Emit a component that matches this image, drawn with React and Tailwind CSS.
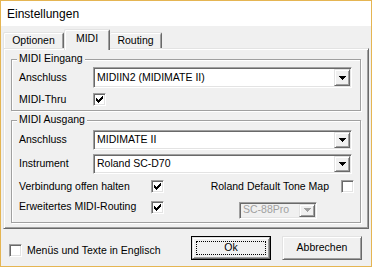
import React from 'react';

const raised =
    'border border-t-[#e3e3e3] border-l-[#e3e3e3] border-b-[#696969] border-r-[#696969] shadow-[inset_1px_1px_0_#fff,inset_-1px_-1px_0_#a0a0a0]';
const sunken =
    'border border-t-[#a0a0a0] border-l-[#a0a0a0] border-b-white border-r-white shadow-[inset_1px_1px_0_#696969,inset_-1px_-1px_0_#e3e3e3]';

const CHECK = ['0000001', '0000011', '1000111', '1101110', '1111100', '0111000', '0010000'];

const Check = ({ checked, className = '' }) => (
    <div className={`${sunken} w-[13px] h-[13px] bg-white flex items-center justify-center shrink-0 ${className}`}>
        {checked && (
            <svg width="7" height="7" shapeRendering="crispEdges">
                {CHECK.map((row, y) =>
                    row.split('').map((c, x) =>
                        c === '1' ? <rect key={`${x}-${y}`} x={x} y={y} width="1" height="1" fill="#000" /> : null
                    )
                )}
            </svg>
        )}
    </div>
);

const Combo = ({ value, disabled, className = '' }) => (
    <div className={`${sunken} flex items-center ${disabled ? 'bg-[#f0f0f0]' : 'bg-white'} ${className}`}>
        <span className={`flex-1 pl-[3px] truncate ${disabled ? 'text-[#a0a0a0]' : 'text-black'}`}>{value}</span>
        <div className={`${raised} w-[16px] self-stretch my-[1px] mr-[1px] bg-[#f0f0f0] flex items-center justify-center`}>
            <svg width="7" height="4" shapeRendering="crispEdges">
                <path d="M0 0h7v1h-1v1h-1v1h-1v1h-1v-1h-1v-1h-1v-1h-1z" fill={disabled ? '#a0a0a0' : '#000'} />
            </svg>
        </div>
    </div>
);

const Group = ({ title, className = '', children }) => (
    <div className={`relative border border-[#a0a0a0] shadow-[inset_1px_1px_0_#fff,1px_1px_0_#fff] ${className}`}>
        <span className="absolute top-[-8px] left-[5px] bg-[#f0f0f0] px-[2px] leading-[13px]">{title}</span>
        {children}
    </div>
);

const Row = ({ label, children, className = '' }) => (
    <div className={`flex items-center ${className}`}>
        <span className="w-[74px] shrink-0">{label}</span>
        {children}
    </div>
);

const App = () => {
    return (
        <div className="w-[372px] h-[267px] border border-[#e5b552] bg-[#f0f0f0] flex flex-col font-['Liberation_Sans',Arial,sans-serif] text-[10.5px] text-black">
            <div className="h-[25px] bg-white flex items-center pl-[6px] text-[12px] shrink-0">Einstellungen</div>

            <div className="pl-[2px] pt-[3px]">
                <div className="flex items-end h-[20px] relative z-10">
                    <div className="w-[61px] h-[16px] mb-[1px] pt-[1px] flex items-center justify-center rounded-t-[2px] border border-t-[#e3e3e3] border-l-[#e3e3e3] border-r-[#696969] border-b-0 shadow-[inset_1px_1px_0_#fff,inset_-1px_0_0_#a0a0a0]">
                        Optionen
                    </div>
                    <div className="w-[46px] h-[21px] mb-[-1px] pb-[3px] bg-[#f0f0f0] flex items-center justify-center rounded-t-[2px] border border-t-[#e3e3e3] border-l-[#e3e3e3] border-r-[#696969] border-b-0 shadow-[inset_1px_1px_0_#fff,inset_-1px_0_0_#a0a0a0]">
                        MIDI
                    </div>
                    <div className="w-[52px] h-[16px] mb-[1px] pt-[1px] flex items-center justify-center rounded-t-[2px] border border-t-[#e3e3e3] border-l-0 border-r-[#696969] border-b-0 shadow-[inset_0_1px_0_#fff,inset_-1px_0_0_#a0a0a0]">
                        Routing
                    </div>
                </div>

                <div className={`${raised} w-[366px] h-[181px] mt-[-1px] px-[7px] pt-[10px]`}>
                    <Group title="MIDI Eingang" className="w-[350px] h-[52px] pl-[7px] pr-[8px] pt-[7px]">
                        <Row label="Anschluss">
                            <Combo value="MIDIIN2 (MIDIMATE II)" className="flex-1 h-[21px]" />
                        </Row>
                        <Row label="MIDI-Thru" className="mt-[4px]">
                            <Check checked />
                        </Row>
                    </Group>

                    <Group title="MIDI Ausgang" className="w-[350px] h-[103px] mt-[9px] pl-[7px] pr-[6px] pt-[9px]">
                        <Row label="Anschluss" className="pr-[2px]">
                            <Combo value="MIDIMATE II" className="flex-1 h-[20px]" />
                        </Row>
                        <Row label="Instrument" className="mt-[4px] pr-[2px]">
                            <Combo value="Roland SC-D70" className="flex-1 h-[20px]" />
                        </Row>
                        <div className="flex items-center mt-[5px]">
                            <span className="w-[132px] shrink-0">Verbindung offen halten</span>
                            <Check checked />
                            <span className="flex-1 text-right">Roland Default Tone Map</span>
                            <Check className="ml-[12px]" />
                        </div>
                        <div className="flex items-start mt-[6px]">
                            <div className="flex items-center h-[13px]">
                                <span className="w-[132px] shrink-0">Erweitertes MIDI-Routing</span>
                                <Check checked />
                            </div>
                            <Combo value="SC-88Pro" disabled className="ml-[75px] mt-[1px] w-[78px] h-[17px]" />
                        </div>
                    </Group>
                </div>
            </div>

            <div className="flex items-start pl-[8px] pt-[7px]">
                <div className="flex items-center mt-[7px]">
                    <Check />
                    <span className="ml-[5px]">Menüs und Texte in Englisch</span>
                </div>
                <div className="ml-auto mr-[9px] flex gap-[11px]">
                    <div className="w-[80px] h-[24px] border border-[#000] p-0">
                        <div className={`${raised} w-full h-full flex items-center justify-center relative`}>
                            <span className="absolute inset-[3px] border border-dotted border-black" />
                            Ok
                        </div>
                    </div>
                    <div className={`${raised} w-[80px] h-[24px] flex items-center justify-center`}>Abbrechen</div>
                </div>
            </div>
        </div>
    );
};

export default App;
